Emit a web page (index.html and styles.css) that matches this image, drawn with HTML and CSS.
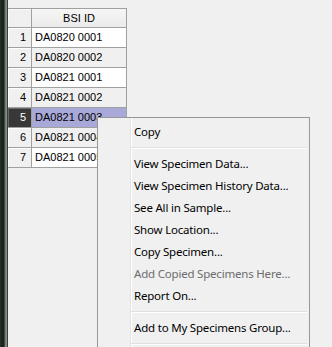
FILE: index.html
```html
<!DOCTYPE html>
<html lang="en">
<head>
    <meta charset="UTF-8">
    <title>Specimens</title>
    <link rel="stylesheet" href="styles.css">
</head>
<body>

<div class="window">
    <div class="edge"></div>
    <div class="panel">
        <!-- specimen grid -->
        <div class="grid">
            <div class="row head">
                <div class="rh corner"></div>
                <div class="cell colhead">BSI ID</div>
            </div>
            <div class="row">
                <div class="rh">1</div>
                <div class="cell">DA0820 0001</div>
            </div>
            <div class="row alt">
                <div class="rh">2</div>
                <div class="cell">DA0820 0002</div>
            </div>
            <div class="row">
                <div class="rh">3</div>
                <div class="cell">DA0821 0001</div>
            </div>
            <div class="row alt">
                <div class="rh">4</div>
                <div class="cell">DA0821 0002</div>
            </div>
            <div class="row selected">
                <div class="rh">5</div>
                <div class="cell">DA0821 0003</div>
            </div>
            <div class="row alt">
                <div class="rh">6</div>
                <div class="cell">DA0821 0004</div>
            </div>
            <div class="row">
                <div class="rh">7</div>
                <div class="cell">DA0821 0005</div>
            </div>
        </div>
    </div>
</div>

<!-- right-click menu -->
<div class="menu">
    <div class="item">Copy</div>
    <div class="sep"></div>
    <div class="item">View Specimen Data...</div>
    <div class="item">View Specimen History Data...</div>
    <div class="item">See All in Sample...</div>
    <div class="item">Show Location...</div>
    <div class="item">Copy Specimen...</div>
    <div class="item disabled">Add Copied Specimens Here...</div>
    <div class="item">Report On...</div>
    <div class="sep"></div>
    <div class="item">Add to My Specimens Group...</div>
    <div class="sep"></div>
</div>

</body>
</html>
```

FILE: styles.css
```css
html, body {
    margin: 0;
    padding: 0;
    height: 100%;
    overflow: hidden;
}
body {
    background-color: #f0f0f0;
    font-family: "Liberation Sans", Arial, sans-serif;
    position: relative;
}
.window {
    display: flex;
    height: 347px;
}
.edge {
    width: 7px;
    border-right: 1px solid #3c3f3c;
    background: linear-gradient(to right, #2a302a 0, #1b261c 2px, #15221a 4px, #6c776c 5px, #8d958d 7px);
}
.panel {
    flex: 1;
    padding-top: 8px;
}

/* grid */
.grid {
    width: 119px;
    border-top: 1px solid #a0a0a0;
    font-size: 11px;
    color: #000;
}
.grid .row {
    display: flex;
    height: 20px;
}
.grid .row.head {
    height: 19px;
}
.grid .rh {
    width: 18px;
    padding-right: 5px;
    border-right: 1px solid #a0a0a0;
    border-bottom: 1px solid #a0a0a0;
    background-color: #f0f0f0;
    box-shadow: inset 1px 1px 0 #fff;
    text-align: right;
    line-height: 19px;
}
.grid .rh.corner {
    box-shadow: inset 1px 1px 0 #fafafa;
}
.grid .cell {
    width: 91px;
    padding-left: 3px;
    border-right: 1px solid #a0a0a0;
    border-bottom: 1px solid #a0a0a0;
    background-color: #fff;
    line-height: 19px;
    white-space: nowrap;
    overflow: hidden;
}
.grid .row.head .rh,
.grid .row.head .cell {
    line-height: 18px;
}
.grid .colhead {
    width: 94px;
    padding-left: 0;
    text-align: center;
    background: linear-gradient(#f6f6f6, #ebebeb);
}
.grid .row.alt .cell {
    background-color: #f0f0f0;
}
.grid .row.selected .rh {
    background-color: #383838;
    color: #fff;
    box-shadow: inset 1px 1px 0 #6a6a6a;
}
.grid .row.selected .cell {
    background-color: #a9a9d9;
}

/* context menu */
.menu {
    position: absolute;
    left: 97px;
    top: 117px;
    width: 211px;
    padding: 3px 0;
    border: 1px solid #979797;
    background-color: #f0f0f0;
    font-family: "Noto Sans", "Open Sans", sans-serif;
    font-size: 11.5px;
    letter-spacing: -0.2px;
    color: #000;
    background-image: linear-gradient(to right, transparent 32px, #e2e3e3 32px, #e2e3e3 33px, #fff 33px, #fff 34px, transparent 34px);
}
.menu .item {
    height: 22px;
    line-height: 22px;
    padding-left: 36px;
    white-space: nowrap;
}
.menu .item.disabled {
    color: #6d6d6d;
}
.menu .sep {
    height: 10px;
    margin: 0 2px 0 33px;
    background: linear-gradient(transparent 4px, #e0e0e0 4px, #e0e0e0 5px, #fff 5px, #fff 6px, transparent 6px);
}
```
